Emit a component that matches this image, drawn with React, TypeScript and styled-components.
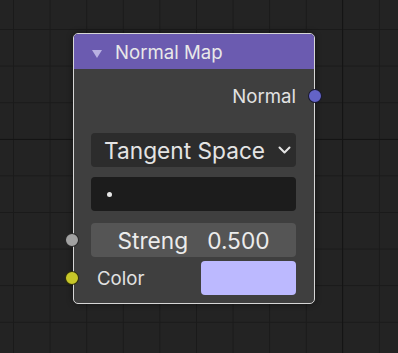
import styled, { createGlobalStyle } from 'styled-components';

const GlobalStyle = createGlobalStyle`
  html, body {
    margin: 0;
    padding: 0;
    background: #232323;
  }
  body {
    font-family: Inter, "Noto Sans", sans-serif;
  }
`;

// node editor backdrop with minor + major grid
const Canvas = styled.div`
  position: relative;
  width: 398px;
  height: 353px;
  overflow: hidden;
  background-color: #232323;
  background-image:
    linear-gradient(to right, #141414 1px, transparent 1px),
    linear-gradient(to bottom, #141414 1px, transparent 1px),
    linear-gradient(to right, #1a1a1a 1px, transparent 1px),
    linear-gradient(to bottom, #1a1a1a 1px, transparent 1px);
  background-size: 366px 366px, 366px 366px, 36.6px 36.6px, 36.6px 36.6px;
  background-position: 342px 0, 0 139px, 13px 0, 0 29px;
`;

const Node = styled.div`
  position: absolute;
  left: 73px;
  top: 33px;
  width: 242px;
  height: 271px;
  box-sizing: border-box;
  border: 1px solid #d6d6d6;
  border-radius: 5px;
  background: #3f3f3f;
  box-shadow: 0 0 6px rgba(0, 0, 0, 0.45);
  display: flex;
  flex-direction: column;
`;

const Header = styled.div`
  height: 35px;
  flex-shrink: 0;
  background: #6b5bb0;
  border-radius: 4px 4px 0 0;
  display: flex;
  align-items: center;
  gap: 13px;
  padding-left: 18px;
  color: #e8e8e8;
  font-size: 18.6px;
`;

const Collapse = styled.span`
  width: 0;
  height: 0;
  margin-top: 5px;
  border-left: 5px solid transparent;
  border-right: 5px solid transparent;
  border-top: 8px solid #b9b1e2;
`;

const Body = styled.div`
  display: flex;
  flex-direction: column;
  padding: 0 18px 0 17px;
`;

const Row = styled.div<{ $top: number; $end?: boolean; $h?: number }>`
  position: relative;
  margin-top: ${(p) => p.$top}px;
  height: ${(p) => p.$h ?? 34}px;
  flex-shrink: 0;
  display: flex;
  align-items: center;
  justify-content: ${(p) => (p.$end ? 'flex-end' : 'flex-start')};
  color: #e2e2e2;
  font-size: 18.6px;
`;

const Socket = styled.span<{ $color: string; $side: 'left' | 'right' }>`
  position: absolute;
  ${(p) => p.$side}: -26px;
  top: 50%;
  width: 14px;
  height: 14px;
  margin-top: -7px;
  box-sizing: border-box;
  border-radius: 50%;
  background: ${(p) => p.$color};
  border: 1px solid rgba(0, 0, 0, 0.75);
`;

const Dropdown = styled.div`
  flex: 1;
  height: 100%;
  box-sizing: border-box;
  border-radius: 4px;
  background: #2c2c2c;
  display: flex;
  align-items: center;
  justify-content: space-between;
  padding: 0 5px 0 13px;
  color: #e4e4e4;
  font-size: 22.7px;
`;

const TextField = styled.div`
  flex: 1;
  height: 100%;
  border-radius: 4px;
  background: #1c1c1c;
  display: flex;
  align-items: center;
  padding-left: 16px;
`;

const Dot = styled.span`
  width: 5px;
  height: 5px;
  border-radius: 50%;
  background: #e8e8e8;
`;

const Slider = styled.div`
  flex: 1;
  height: 100%;
  border-radius: 4px;
  background: #555555;
  display: flex;
  align-items: center;
  justify-content: center;
  gap: 19px;
  color: #ececec;
  font-size: 22.7px;
`;

const Label = styled.span<{ $pad?: number }>`
  padding-left: ${(p) => p.$pad ?? 0}px;
  flex: 1;
`;

const Swatch = styled.div<{ $color: string }>`
  width: 95px;
  height: 100%;
  border-radius: 4px;
  background: ${(p) => p.$color};
`;

const Chevron = () => (
  <svg width="13" height="8" viewBox="0 0 13 8">
    <path d="M1.5 1.5 L6.5 6.5 L11.5 1.5" fill="none" stroke="#e4e4e4" strokeWidth="2" strokeLinecap="round" strokeLinejoin="round" />
  </svg>
);

export default function App() {
  return (
    <Canvas>
      <GlobalStyle />
      <Node>
        <Header>
          <Collapse />
          Normal Map
        </Header>
        <Body>
          <Row $top={15} $h={24} $end>
            Normal
            <Socket $color="#6363c7" $side="right" />
          </Row>
          <Row $top={25}>
            <Dropdown>
              Tangent Space
              <Chevron />
            </Dropdown>
          </Row>
          <Row $top={10}>
            <TextField>
              <Dot />
            </TextField>
          </Row>
          <Row $top={12}>
            <Socket $color="#a1a1a1" $side="left" />
            <Slider>
              <span>Streng</span>
              <span>0.500</span>
            </Slider>
          </Row>
          <Row $top={4}>
            <Socket $color="#c7c729" $side="left" />
            <Label $pad={6}>Color</Label>
            <Swatch $color="#bcb9ff" />
          </Row>
        </Body>
      </Node>
    </Canvas>
  );
}
